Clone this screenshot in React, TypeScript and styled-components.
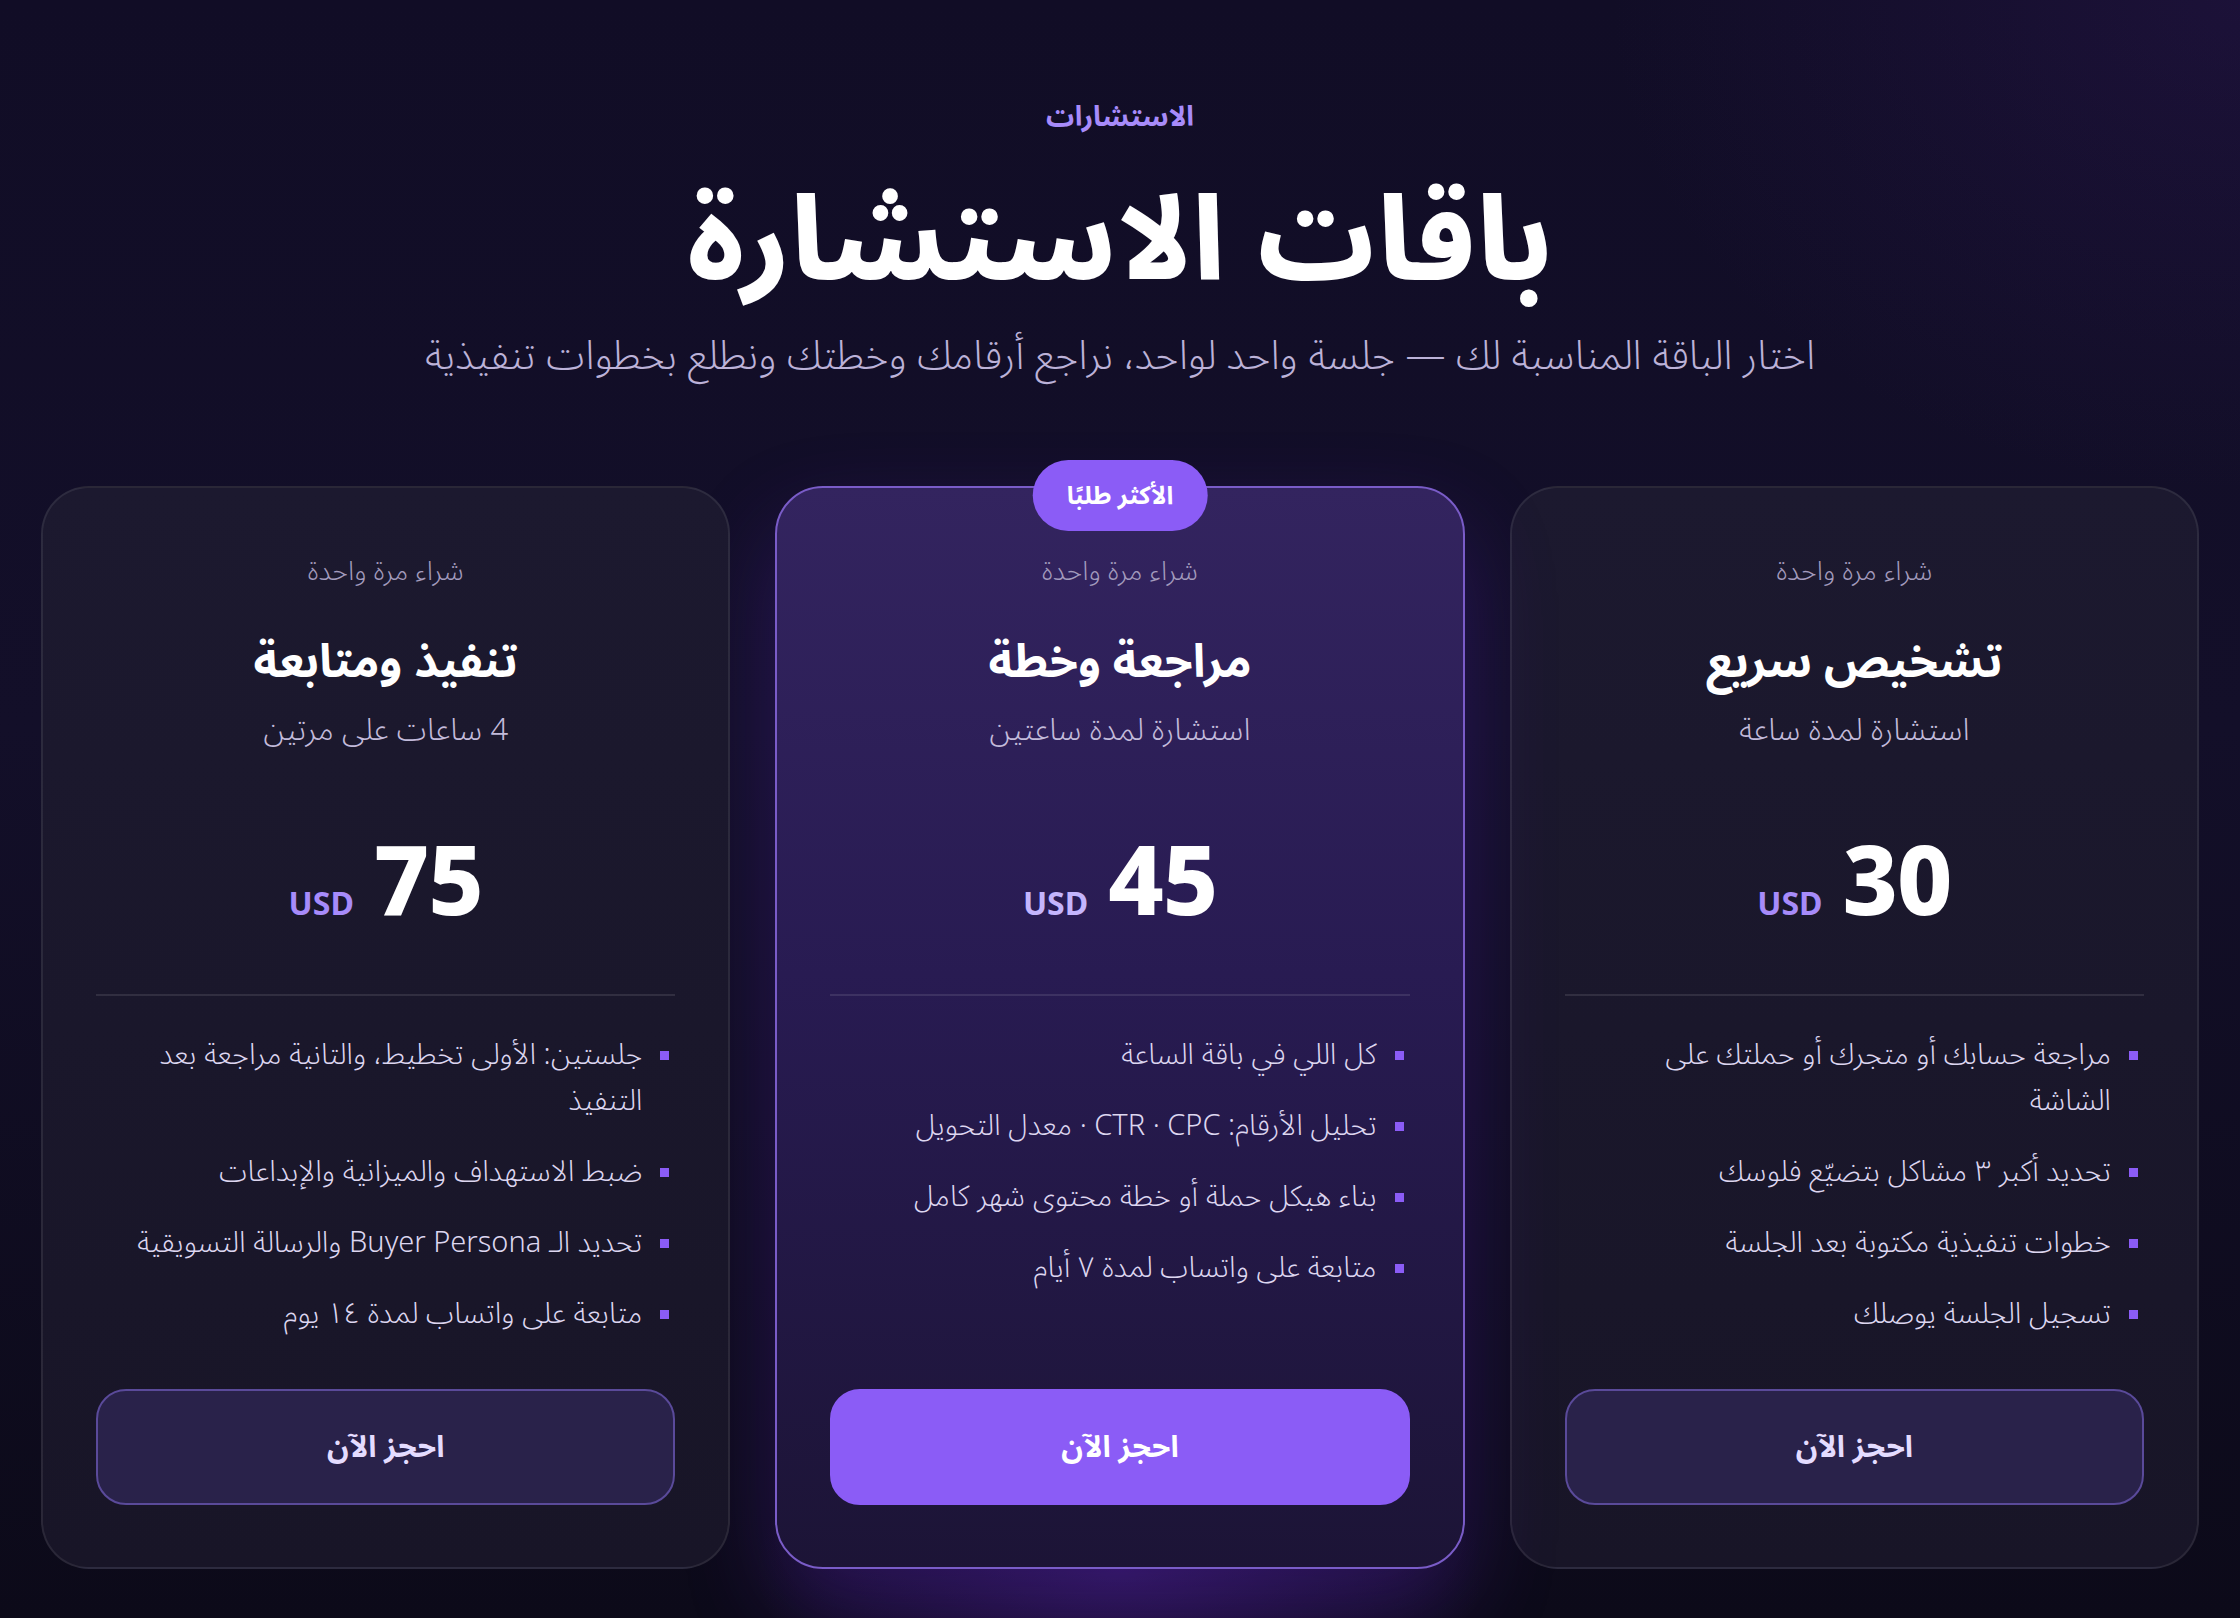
import styled, { createGlobalStyle, css } from "styled-components";

const GlobalStyle = createGlobalStyle`
  * { box-sizing: border-box; }
  html, body {
    margin: 0;
    padding: 0;
    background: #0d0b1c;
  }
  body {
    font-family: "Noto Sans Arabic", "Noto Sans", "DejaVu Sans", sans-serif;
    color: #ffffff;
  }
`;

type Plan = {
  label: string;
  title: string;
  duration: string;
  price: string;
  features: string[];
  featured?: boolean;
};

const plans: Plan[] = [
  {
    label: "شراء مرة واحدة",
    title: "تشخيص سريع",
    duration: "استشارة لمدة ساعة",
    price: "30",
    features: [
      "مراجعة حسابك أو متجرك أو حملتك على الشاشة",
      "تحديد أكبر ٣ مشاكل بتضيّع فلوسك",
      "خطوات تنفيذية مكتوبة بعد الجلسة",
      "تسجيل الجلسة يوصلك",
    ],
  },
  {
    label: "شراء مرة واحدة",
    title: "مراجعة وخطة",
    duration: "استشارة لمدة ساعتين",
    price: "45",
    featured: true,
    features: [
      "كل اللي في باقة الساعة",
      "تحليل الأرقام: CTR · CPC · معدل التحويل",
      "بناء هيكل حملة أو خطة محتوى شهر كامل",
      "متابعة على واتساب لمدة ٧ أيام",
    ],
  },
  {
    label: "شراء مرة واحدة",
    title: "تنفيذ ومتابعة",
    duration: "4 ساعات على مرتين",
    price: "75",
    features: [
      "جلستين: الأولى تخطيط، والتانية مراجعة بعد التنفيذ",
      "ضبط الاستهداف والميزانية والإبداعات",
      "تحديد الـ Buyer Persona والرسالة التسويقية",
      "متابعة على واتساب لمدة ١٤ يوم",
    ],
  },
];

export default function App() {
  return (
    <>
      <GlobalStyle />
      <Page dir="rtl">
        <Header>
          <Eyebrow>الاستشارات</Eyebrow>
          <Heading>باقات الاستشارة</Heading>
          <Lead>اختار الباقة المناسبة لك — جلسة واحد لواحد، نراجع أرقامك وخطتك ونطلع بخطوات تنفيذية</Lead>
        </Header>
        <Cards>
          {plans.map((plan) => (
            <Card key={plan.title} $featured={plan.featured}>
              {plan.featured && <Badge>الأكثر طلبًا</Badge>}
              <PlanLabel>{plan.label}</PlanLabel>
              <PlanTitle>{plan.title}</PlanTitle>
              <PlanDuration>{plan.duration}</PlanDuration>
              <PriceRow>
                <Amount>{plan.price}</Amount>
                <Currency $featured={plan.featured}>USD</Currency>
              </PriceRow>
              <Divider />
              <Features>
                {plan.features.map((f) => (
                  <Feature key={f}>
                    <Bullet />
                    <span>{f}</span>
                  </Feature>
                ))}
              </Features>
              <BookButton $featured={plan.featured}>احجز الآن</BookButton>
            </Card>
          ))}
        </Cards>
      </Page>
    </>
  );
}

const Page = styled.main`
  min-height: 1618px;
  padding: 96px 41px 48px;
  background:
    radial-gradient(ellipse 520px 260px at 50% 97%, rgba(88, 34, 170, 0.35), transparent 70%),
    radial-gradient(ellipse 900px 700px at 100% 0%, rgba(60, 30, 110, 0.25), transparent 70%),
    linear-gradient(180deg, #110d26 0%, #130f29 45%, #0c0a19 100%);
`;

const Header = styled.header`
  display: flex;
  flex-direction: column;
  align-items: center;
  text-align: center;
`;

const Eyebrow = styled.div`
  font-size: 28px;
  font-weight: 700;
  line-height: 44px;
  color: #a78bfa;
`;

const Heading = styled.h1`
  margin: 28px 0 0;
  font-size: 116px;
  font-weight: 800;
  line-height: 150px;
  color: #ffffff;
`;

const Lead = styled.p`
  margin: 11px 0 0;
  font-size: 40px;
  line-height: 56px;
  font-weight: 300;
  color: #bcb2d8;
`;

const Cards = styled.section`
  margin-top: 101px;
  display: grid;
  grid-template-columns: repeat(3, 1fr);
  gap: 45px;
  align-items: stretch;
`;

const Card = styled.article<{ $featured?: boolean }>`
  position: relative;
  display: flex;
  flex-direction: column;
  align-items: center;
  min-height: 1083px;
  padding: 62px 53px 62px;
  border-radius: 48px;
  border: 2px solid rgba(255, 255, 255, 0.08);
  background: linear-gradient(180deg, #1c192f 0%, #181527 100%);
  ${(p) =>
    p.$featured &&
    css`
      border-color: #7a5cc8;
      background: linear-gradient(180deg, #33245f 0%, #281b52 45%, #1c1436 100%);
      box-shadow: 0 40px 90px rgba(98, 40, 200, 0.28);
    `}
`;

const Badge = styled.div`
  position: absolute;
  top: -28px;
  left: 50%;
  transform: translateX(-50%);
  height: 71px;
  padding: 0 34px;
  display: flex;
  align-items: center;
  border-radius: 36px;
  background: #8b5cf6;
  color: #ffffff;
  font-size: 25px;
  font-weight: 700;
  white-space: nowrap;
`;

const PlanLabel = styled.div`
  font-size: 27px;
  font-weight: 300;
  line-height: 44px;
  color: #a39bbd;
`;

const PlanTitle = styled.h2`
  margin: 38px 0 0;
  font-size: 46px;
  font-weight: 700;
  line-height: 62px;
  color: #ffffff;
`;

const PlanDuration = styled.div`
  margin-top: 12px;
  font-size: 31px;
  font-weight: 300;
  line-height: 48px;
  color: #c3bbdb;
`;

const PriceRow = styled.div`
  margin-top: 69px;
  display: flex;
  align-items: baseline;
  gap: 20px;
  direction: rtl;
`;

const Amount = styled.span`
  font-family: "Noto Sans", "DejaVu Sans", sans-serif;
  font-size: 96px;
  font-weight: 800;
  line-height: 110px;
  color: #ffffff;
  letter-spacing: -1px;
`;

const Currency = styled.span<{ $featured?: boolean }>`
  font-family: "Noto Sans", "DejaVu Sans", sans-serif;
  font-size: 32px;
  font-weight: 700;
  color: ${(p) => (p.$featured ? "#c4b5fd" : "#a78bfa")};
`;

const Divider = styled.hr`
  align-self: stretch;
  margin: 61px 0 0;
  border: 0;
  height: 2px;
  background: rgba(255, 255, 255, 0.1);
`;

const Features = styled.ul`
  align-self: stretch;
  list-style: none;
  margin: 36px 0 0;
  padding: 0 6px 0 24px;
  display: flex;
  flex-direction: column;
  gap: 25px;
`;

const Feature = styled.li`
  display: flex;
  align-items: flex-start;
  gap: 18px;
  font-size: 29px;
  font-weight: 300;
  line-height: 46px;
  color: #ddd6f0;
`;

const Bullet = styled.i`
  flex: none;
  width: 9px;
  height: 9px;
  margin-top: 19px;
  background: #8b5cf6;
`;

const BookButton = styled.button<{ $featured?: boolean }>`
  align-self: stretch;
  margin-top: auto;
  height: 116px;
  border-radius: 30px;
  border: 2px solid #5a4a9a;
  background: #29224a;
  color: #e4dcff;
  font-family: inherit;
  font-size: 30px;
  font-weight: 700;
  cursor: pointer;
  ${(p) =>
    p.$featured &&
    css`
      border-color: #8b5cf6;
      background: #8b5cf6;
      color: #ffffff;
    `}
`;
